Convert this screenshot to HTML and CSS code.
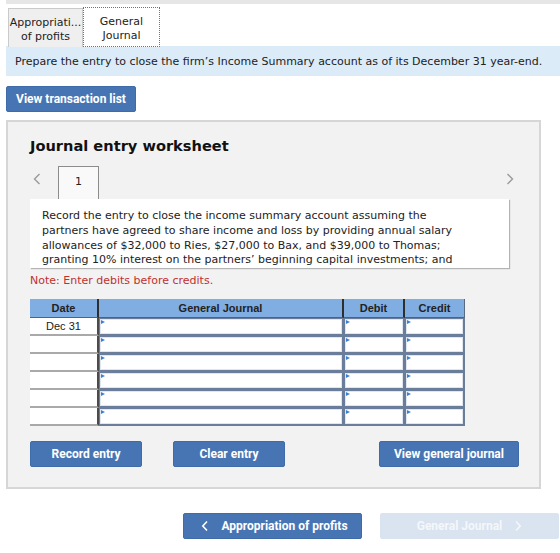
FILE: index.html
```html
<!DOCTYPE html>
<html lang="en">
<head>
<meta charset="utf-8">
<title>Journal entry worksheet</title>
<link rel="stylesheet" href="styles.css">
</head>
<body>
<div class="page">
  <div class="topbar"></div>

  <div class="tabs">
    <div class="tab">Appropriati...<br>of profits</div>
    <div class="tab tab-active">General<br>Journal</div>
  </div>

  <div class="prompt">Prepare the entry to close the firm’s Income Summary account as of its December 31 year-end.</div>

  <button class="btn btn-list">View transaction list</button>

  <section class="worksheet">
    <h2 class="ws-title">Journal entry worksheet</h2>

    <div class="pager">
      <svg class="chev chev-left" width="8" height="12" viewBox="0 0 8 12"><path d="M6.5 1 L1.5 6 L6.5 11" fill="none" stroke="#9a9a9a" stroke-width="1.4"/></svg>
      <div class="page-tab">1</div>
      <svg class="chev chev-right" width="8" height="12" viewBox="0 0 8 12"><path d="M1.5 1 L6.5 6 L1.5 11" fill="none" stroke="#9a9a9a" stroke-width="1.4"/></svg>
    </div>

    <div class="task">Record the entry to close the income summary account assuming the<br>partners have agreed to share income and loss by providing annual salary<br>allowances of $32,000 to Ries, $27,000 to Bax, and $39,000 to Thomas;<br>granting 10% interest on the partners’ beginning capital investments; and</div>

    <p class="note">Note: Enter debits before credits.</p>

    <div class="jtable">
      <div class="th">Date</div>
      <div class="th">General Journal</div>
      <div class="th">Debit</div>
      <div class="th th-last">Credit</div>

      <div class="date">Dec 31</div><div class="cell"></div><div class="cell"></div><div class="cell"></div>
      <div class="date"></div><div class="cell"></div><div class="cell"></div><div class="cell"></div>
      <div class="date"></div><div class="cell"></div><div class="cell"></div><div class="cell"></div>
      <div class="date"></div><div class="cell"></div><div class="cell"></div><div class="cell"></div>
      <div class="date"></div><div class="cell"></div><div class="cell"></div><div class="cell"></div>
      <div class="date"></div><div class="cell"></div><div class="cell"></div><div class="cell"></div>
    </div>

    <div class="actions">
      <button class="btn btn-record">Record entry</button>
      <button class="btn btn-clear">Clear entry</button>
      <button class="btn btn-view">View general journal</button>
    </div>
  </section>

  <nav class="steps">
    <button class="btn step step-prev">
      <svg width="8" height="12" viewBox="0 0 8 12"><path d="M6 1.5 L1.8 6 L6 10.5" fill="none" stroke="#ffffff" stroke-width="1.6"/></svg>
      <span>Appropriation of profits</span>
    </button>
    <button class="btn step step-next" disabled>
      <span>General Journal</span>
      <svg width="8" height="12" viewBox="0 0 8 12"><path d="M2 1.5 L6.2 6 L2 10.5" fill="none" stroke="#ffffff" stroke-width="1.6"/></svg>
    </button>
  </nav>
</div>
</body>
</html>
```

FILE: styles.css
```css
* {
  box-sizing: border-box;
}

html, body {
  margin: 0;
  padding: 0;
  background: #ffffff;
}

body {
  font-family: "DejaVu Sans", Verdana, sans-serif;
  font-size: 11px;
  color: #222222;
}

.page {
  padding-left: 6px;
  width: 560px;
}

.topbar {
  height: 4px;
  background: #e6e6e6;
}

/* question part tabs */
.tabs {
  display: flex;
  margin-top: 3px;
  margin-left: 2px;
  align-items: flex-end;
}

.tab {
  width: 75px;
  height: 39px;
  padding-top: 7px;
  text-align: center;
  line-height: 13.5px;
  background: #efefef;
  border: 1px solid #cacaca;
  border-bottom: none;
  color: #222222;
}

.tab-active {
  width: 77px;
  height: 40px;
  background: #ffffff;
  border: 1px dotted #4a78b8;
  border-bottom: 1px dotted #4a78b8;
  padding-top: 7px;
}

.prompt {
  height: 30px;
  margin-top: -1px;
  padding-left: 9px;
  line-height: 31px;
  background: #dcebf8;
  white-space: nowrap;
}

/* buttons */
.btn {
  font-family: Roboto, "Liberation Sans", Arial, sans-serif;
  font-weight: 700;
  font-size: 12px;
  color: #ffffff;
  background: #4775b4;
  border: 1px solid #3f6ba8;
  border-radius: 2px;
  height: 26px;
  padding: 0;
  cursor: pointer;
}

.btn-list {
  display: block;
  width: 130px;
  margin-top: 10px;
}

/* worksheet panel */
.worksheet {
  width: 535px;
  margin-top: 8px;
  padding: 14px 20px 20px 22px;
  background: #f2f2f2;
  border: 2px solid #d6d6d6;
  display: flex;
  flex-direction: column;
}

.ws-title {
  margin: 0;
  font-size: 14.6px;
  font-weight: 700;
  line-height: 20px;
  color: #111111;
}

.pager {
  display: flex;
  align-items: flex-start;
  height: 33px;
  margin-top: 10px;
}

.chev {
  display: block;
  margin-top: 7px;
}

.chev-left {
  margin-left: 3px;
}

.chev-right {
  margin-left: auto;
  margin-right: 5px;
}

.page-tab {
  width: 41px;
  height: 33px;
  margin-left: 17px;
  padding-top: 8px;
  text-align: center;
  background: #f9f9f9;
  border: 1px solid #8c8c8c;
  border-bottom: none;
  line-height: 14px;
}

.task {
  width: 479px;
  height: 69px;
  padding: 10px 12px 0 12px;
  background: #ffffff;
  line-height: 14.8px;
  white-space: nowrap;
  overflow: hidden;
  box-shadow: 1px 1px 1px #b3b3b3;
}

.note {
  margin: 6px 0 0 0;
  line-height: 14px;
  color: #c0302f;
}

/* journal grid */
.jtable {
  display: grid;
  grid-template-columns: 69px 245px 61px 60px;
  grid-template-rows: 19px;
  grid-auto-rows: 18px;
  width: 435px;
  margin-top: 11px;
  font-family: "Liberation Sans", Arial, sans-serif;
  font-size: 11px;
}

.th {
  background: #80ade2;
  font-weight: 700;
  color: #222222;
  text-align: center;
  line-height: 18px;
  border-right: 2px solid #2e2e2e;
  border-bottom: 1px solid #53627a;
}

.th-last {
  border-right: 1px solid #5a6a80;
}

.date {
  background: #ffffff;
  text-align: center;
  line-height: 16px;
  border-bottom: 2px solid #a9a9a9;
  border-right: 2px solid #4b4b4b;
  color: #222222;
}

.cell {
  position: relative;
  background: #ffffff;
  border: 2px solid #6a7e9b;
  border-top-width: 1px;
  border-left-width: 1px;
  box-shadow: inset 0 0 0 1px #dfe6ef;
}

.cell::before {
  content: "";
  position: absolute;
  top: 1px;
  left: 1px;
  border-left: 4px solid #3b80d4;
  border-top: 2px solid transparent;
  border-bottom: 2px solid transparent;
}

.actions {
  display: flex;
  margin-top: 15px;
}

.btn-record {
  width: 112px;
}

.btn-clear {
  width: 112px;
  margin-left: 31px;
}

.btn-view {
  width: 140px;
  margin-left: auto;
}

/* step navigation */
.steps {
  display: flex;
  justify-content: flex-end;
  gap: 18px;
  margin-top: 24px;
  padding-right: 1px;
}

.step {
  width: 179px;
  display: flex;
  align-items: center;
  justify-content: center;
  gap: 12px;
}

.step-prev {
  padding-left: 4px;
}

.step-next {
  background: #dae3f0;
  border-color: #dae3f0;
  color: #f4f7fb;
  cursor: default;
}

.step-next svg path {
  stroke: #f4f7fb;
}
```
